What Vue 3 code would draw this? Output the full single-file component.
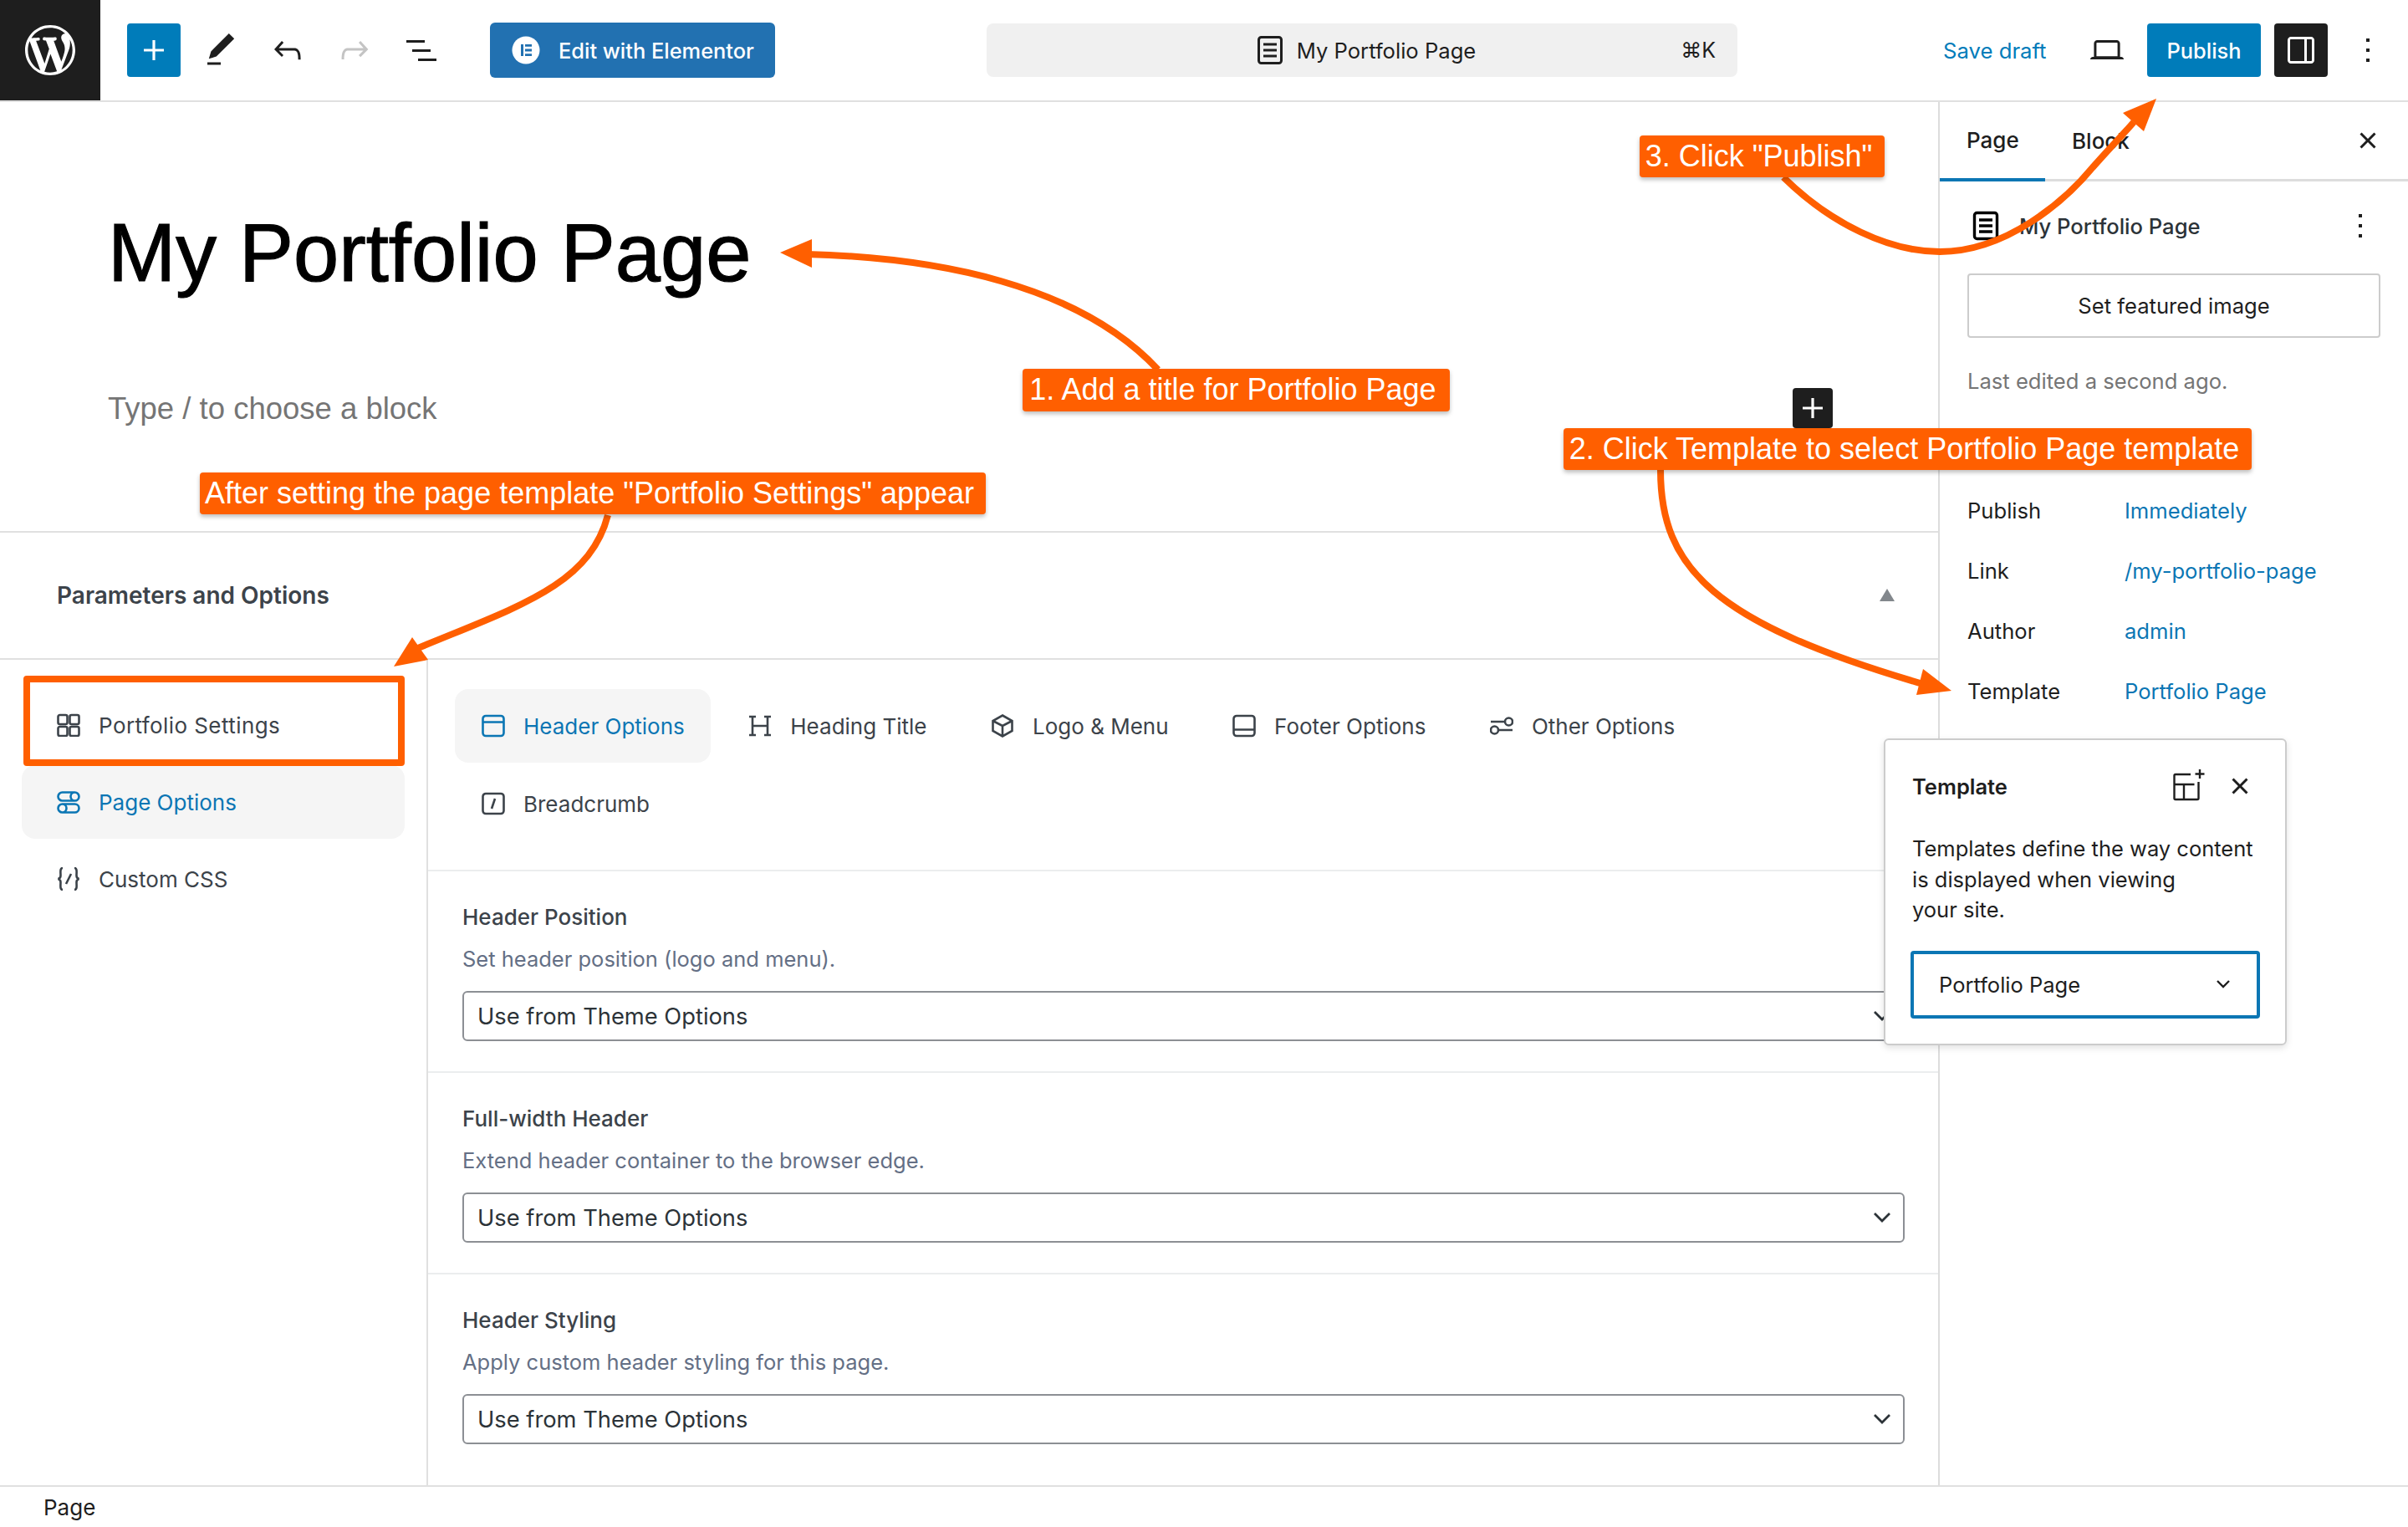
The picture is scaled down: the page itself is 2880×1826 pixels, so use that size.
<script setup>
const I = {
  plus: 'M18 11.2h-5.2V6h-1.6v5.2H6v1.6h5.2V18h1.6v-5.2H18z',
  close: 'M12 13.06l3.712 3.713 1.061-1.06L13.061 12l3.712-3.712-1.06-1.06L12 10.938 8.288 7.227l-1.061 1.06L10.939 12l-3.712 3.712 1.06 1.061L12 13.061z',
  more: 'M13 19h-2v-2h2v2zm0-6h-2v-2h2v2zm0-6h-2V5h2v2z'
}
const sideRows = [
  { label: 'Publish', value: 'Immediately' },
  { label: 'Link', value: '/my-portfolio-page' },
  { label: 'Author', value: 'admin' },
  { label: 'Template', value: 'Portfolio Page' }
]
const navItems = [
  { label: 'Portfolio Settings', wide: true, d: 'M3.500 2h7a2 2 0 0 1 2 2v7a2 2 0 0 1-2 2h-7a2 2 0 0 1-2-2V4a2 2 0 0 1 2-2zM17.500 2h7a2 2 0 0 1 2 2v7a2 2 0 0 1-2 2h-7a2 2 0 0 1-2-2V4a2 2 0 0 1 2-2zM3.500 16h7a2 2 0 0 1 2 2v7a2 2 0 0 1-2 2h-7a2 2 0 0 1-2-2v-7a2 2 0 0 1 2-2zM17.500 16h7a2 2 0 0 1 2 2v7a2 2 0 0 1-2 2h-7a2 2 0 0 1-2-2v-7a2 2 0 0 1 2-2z' },
  { label: 'Page Options', active: true, d: 'M6.500 2.500h15a5 5 0 0 1 0 10h-15a5 5 0 0 1 0-10zM16.500 7.500a5 5 0 1 0 10 0 5 5 0 1 0-10 0zM6.500 16.500h15a5 5 0 0 1 0 10h-15a5 5 0 0 1 0-10zM1.500 21.500a5 5 0 1 0 10 0 5 5 0 1 0-10 0z' },
  { label: 'Custom CSS', d: 'M7 1C3.500 1 4.500 6 4.500 10c0 2.500-1 3.500-3 4 2 .5 3 1.500 3 4 0 4-1 9 2.500 9M21 1c3.500 0 2.500 5 2.500 9 0 2.500 1 3.500 3 4-2 .5-3 1.500-3 4 0 4 1 9-2.500 9M17 8l-6 12' }
]
const tabs = [
  { label: 'Header Options', active: true, d: 'M5 2h18a3.500 3.500 0 0 1 3.500 3.500v17A3.500 3.500 0 0 1 23 26H5a3.500 3.500 0 0 1-3.500-3.500v-17A3.500 3.500 0 0 1 5 2zM1.500 9.500h25' },
  { label: 'Heading Title', d: 'M5 3v22M23 3v22M5 14h18M1 3h8M1 25h8M19 3h8M19 25h8' },
  { label: 'Logo & Menu', d: 'M14 1.500l11.500 6.500v12L14 26.500 2.500 20V8zM2.500 8L14 14l11.500-6M14 14v12.500' },
  { label: 'Footer Options', d: 'M5 2h18a3.500 3.500 0 0 1 3.500 3.500v17A3.500 3.500 0 0 1 23 26H5a3.500 3.500 0 0 1-3.500-3.500v-17A3.500 3.500 0 0 1 5 2zM1.500 18.500h25' },
  { label: 'Other Options', d: 'M1 9h16M27 9a4.500 4.500 0 1 1-9 0 4.500 4.500 0 1 1 9 0zM11 19h16M10 19a4.500 4.500 0 1 1-9 0 4.500 4.500 0 1 1 9 0z' },
  { label: 'Breadcrumb', d: 'M5 2h18a3.500 3.500 0 0 1 3.500 3.500v17A3.500 3.500 0 0 1 23 26H5a3.500 3.500 0 0 1-3.500-3.500v-17A3.500 3.500 0 0 1 5 2zM16 8l-4 12' }
]
const fields = [
  { label: 'Header Position', desc: 'Set header position (logo and menu).' },
  { label: 'Full-width Header', desc: 'Extend header container to the browser edge.' },
  { label: 'Header Styling', desc: 'Apply custom header styling for this page.' }
]
const arrows = [
  { d: 'M1385 442C1290 340 1120 308 965 304', head: '933,302 971,286 971,320' },
  { d: 'M1986 562C1986 680 2050 745 2300 818', head: '2334,826 2300,800 2292,831' },
  { d: 'M2133 212C2190 268 2260 301 2320 301C2400 301 2470 240 2503 200C2525 175 2540 160 2552 146', head: '2579,118 2539,135 2564,157' },
  { d: 'M727 616C705 700 620 725 500 775', head: '471,797 493,762 512,789' }
]
</script>

<template>
  <div class="page">
    <header class="topbar">
      <div class="logo">
        <svg width="60" height="60" viewBox="0 0 20 20"><path fill="#fff" d="M20 10c0-5.510-4.490-10-10-10C4.480 0 0 4.490 0 10c0 5.520 4.480 10 10 10 5.510 0 10-4.480 10-10zM7.780 15.370L4.370 6.220c.55-.02 1.170-.08 1.170-.08.5-.06.44-1.130-.06-1.110 0 0-1.450.11-2.370.11-.18 0-.37 0-.58-.01C4.120 2.690 6.870 1.110 10 1.110c2.330 0 4.450.87 6.050 2.340-.68-.11-1.650.39-1.650 1.580 0 .74.45 1.360.9 2.100.35.61.55 1.360.55 2.460 0 1.490-1.400 5-1.400 5l-3.030-8.370c.54-.02.82-.17.82-.17.5-.05.44-1.250-.06-1.220 0 0-1.440.12-2.380.12-.87 0-2.330-.12-2.330-.12-.5-.03-.56 1.200-.06 1.220l.92.08 1.260 3.410zM17.410 10c.24-.64.74-1.870.43-4.250.7 1.290 1.050 2.710 1.050 4.250 0 3.290-1.730 6.240-4.400 7.780.97-2.590 1.940-5.200 2.920-7.780zM6.100 18.090C3.120 16.650 1.110 13.530 1.110 10c0-1.300.23-2.480.72-3.590C3.250 10.300 4.670 14.200 6.100 18.090zm4.030-6.630l2.580 6.980c-.86.29-1.760.45-2.710.45-.79 0-1.570-.11-2.290-.33.81-2.380 1.620-4.740 2.420-7.100z"/></svg>
      </div>
      <div class="tools">
        <button class="tool add"><svg width="48" height="48" viewBox="0 0 24 24"><path fill="#fff" :d="I.plus"/></svg></button>
        <button class="tool"><svg width="48" height="48" viewBox="0 0 24 24"><path fill="#1e1e1e" d="M20.100 5.100L16.900 2 6.200 12.700l-1.300 4.400 4.500-1.300L20.100 5.100zM4 20.800h8v-1.500H4v1.500z"/></svg></button>
        <button class="tool"><svg width="48" height="48" viewBox="0 0 24 24"><path fill="#1e1e1e" d="M18.300 11.700c-.6-.6-1.400-.9-2.300-.9H6.700l2.900-3.300-1.100-1-4.500 5L8.500 16l1-1-2.700-2.700H16c.5 0 .9.2 1.300.5 1 1 1 3.400 1 4.500v.3h1.500v-.2c0-1.500 0-4.300-1.500-5.700z"/></svg></button>
        <button class="tool"><svg width="48" height="48" viewBox="0 0 24 24"><path fill="#c4c4c4" d="M15.600 6.500l-1.100 1 2.900 3.300H8c-.9 0-1.700.3-2.300.9-1.400 1.500-1.400 4.200-1.400 5.600v.2h1.500v-.3c0-1.100 0-3.500 1-4.500.3-.3.7-.5 1.300-.5h9.200L14.500 15l1.100 1.100 4.600-4.600-4.600-5z"/></svg></button>
        <button class="tool"><svg width="48" height="48" viewBox="0 0 24 24"><path fill="#1e1e1e" d="M3 6h11v1.500H3V6zm3.500 5.500h11V13h-11v-1.500zM21 17H10v1.500h11V17z"/></svg></button>
      </div>
      <div class="elementor">
        <svg width="34" height="34" viewBox="0 0 34 34"><circle cx="17" cy="17" r="16.500" fill="#fff"/><path fill="#2271b1" d="M11 10h3v14h-3zM16 10h8v2.800h-8zM16 15.600h8v2.800h-8zM16 21.200h8V24h-8z"/></svg>
        <span>Edit with Elementor</span>
      </div>
      <div class="search">
        <div class="search-title">
          <svg width="48" height="48" viewBox="0 0 24 24" fill="none" stroke="#1e1e1e" stroke-width="1.500"><rect x="5.250" y="4.250" width="13.500" height="15.500" rx="1.500"/><path d="M8 8.500h8M8 12h8M8 15.500h8"/></svg>
          <span>My Portfolio Page</span>
        </div>
        <span class="shortcut">⌘K</span>
      </div>
      <div class="actions">
        <span class="save">Save draft</span>
        <svg class="laptop" width="48" height="48" viewBox="0 0 24 24"><path fill="#1e1e1e" d="M20.500 16h-.7V8c0-1.100-.9-2-2-2H6.200c-1.100 0-2 .9-2 2v8h-.7c-.8 0-1.500.7-1.500 1.500h20c0-.8-.7-1.500-1.500-1.500zM5.700 8c0-.3.2-.5.5-.5h11.600c.3 0 .5.2.5.5v7.600H5.700V8z"/></svg>
        <button class="publish">Publish</button>
        <button class="toggle"><svg width="48" height="48" viewBox="0 0 24 24"><path fill="#fff" d="M18 4H6c-1.100 0-2 .9-2 2v12c0 1.100.9 2 2 2h12c1.100 0 2-.9 2-2V6c0-1.100-.9-2-2-2zm-4 14.500H6c-.3 0-.5-.2-.5-.5V6c0-.3.2-.5.5-.5h8v13zm4.500-.5c0 .3-.2.5-.5.5h-2.500v-13H18c.3 0 .5.2.5.5v12z"/></svg></button>
        <svg width="48" height="48" viewBox="0 0 24 24"><path fill="#1e1e1e" :d="I.more"/></svg>
      </div>
    </header>

    <div class="main">
      <section class="editor">
        <div class="canvas">
          <h1 class="title">My Portfolio Page</h1>
          <p class="placeholder">Type / to choose a block</p>
          <div class="inserter"><svg width="48" height="48" viewBox="0 0 24 24"><path fill="#fff" :d="I.plus"/></svg></div>
        </div>
        <div class="meta-head">
          <span>Parameters and Options</span>
          <i class="caret"></i>
        </div>
        <div class="meta-body">
          <nav class="nav">
            <div v-for="n in navItems" :key="n.label" class="nav-item" :class="{ active: n.active, wide: n.wide }">
              <svg width="28" height="28" viewBox="0 0 28 28" fill="none" stroke="currentColor" stroke-width="2.600"><path :d="n.d"/></svg>
              <span>{{ n.label }}</span>
            </div>
          </nav>
          <div class="panel">
            <div class="tabs">
              <div v-for="t in tabs" :key="t.label" class="tab" :class="{ active: t.active }">
                <svg width="28" height="28" viewBox="0 0 28 28" fill="none" stroke="currentColor" stroke-width="2.600"><path :d="t.d"/></svg>
                <span>{{ t.label }}</span>
              </div>
            </div>
            <div v-for="f in fields" :key="f.label" class="field">
              <div class="f-label">{{ f.label }}</div>
              <div class="f-desc">{{ f.desc }}</div>
              <div class="f-select">
                <span>Use from Theme Options</span>
                <svg width="24" height="16" viewBox="0 0 24 16" fill="none" stroke="#2c3338" stroke-width="2.800"><path d="M3 3l9 9 9-9"/></svg>
              </div>
            </div>
          </div>
        </div>
      </section>

      <aside class="sidebar">
        <div class="side-tabs">
          <span class="side-tab on">Page</span>
          <span class="side-tab">Block</span>
          <svg class="side-close" width="48" height="48" viewBox="0 0 24 24"><path fill="#1e1e1e" :d="I.close"/></svg>
        </div>
        <div class="side-body">
          <div class="doc-row">
            <svg width="48" height="48" viewBox="0 0 24 24" fill="none" stroke="#000" stroke-width="1.700"><rect x="5.250" y="4.250" width="13.500" height="15.500" rx="1.500"/><path d="M8 8.500h8M8 12h8M8 15.500h8"/></svg>
            <span>My Portfolio Page</span>
            <svg class="doc-more" width="48" height="48" viewBox="0 0 24 24"><path fill="#1e1e1e" :d="I.more"/></svg>
          </div>
          <div class="featured">Set featured image</div>
          <div class="edited">Last edited a second ago.</div>
          <div class="rows">
            <div v-for="r in sideRows" :key="r.label" class="row">
              <span class="r-label">{{ r.label }}</span>
              <span class="r-value">{{ r.value }}</span>
            </div>
          </div>
        </div>
      </aside>
    </div>

    <footer class="status">Page</footer>

    <div class="popover">
      <div class="pop-head">
        <b>Template</b>
        <svg class="pop-add" width="38" height="38" viewBox="0 0 38 38" fill="none" stroke="#1e1e1e" stroke-width="2.400"><path d="M22 6H4a1.500 1.500 0 0 0-1.500 1.500v27a1.500 1.500 0 0 0 1.500 1.500h26a1.500 1.500 0 0 0 1.500-1.500V15M2.500 18h24M14 18v18M33 0v11M27.500 5.500h11"/></svg>
        <svg class="pop-close" width="48" height="48" viewBox="0 0 24 24"><path fill="#1e1e1e" :d="I.close"/></svg>
      </div>
      <p class="pop-text">Templates define the way content<br>is displayed when viewing<br>your site.</p>
      <div class="pop-select">
        <span>Portfolio Page</span>
        <svg width="18" height="12" viewBox="0 0 18 12" fill="none" stroke="#1e1e1e" stroke-width="2.400"><path d="M2 2l7 7 7-7"/></svg>
      </div>
    </div>

    <div class="highlight"></div>
    <svg class="overlay" width="2880" height="1826" viewBox="0 0 2880 1826">
      <g v-for="a in arrows" :key="a.d">
        <path :d="a.d" fill="none" stroke="#ff5f00" stroke-width="8"/>
        <polygon :points="a.head" fill="#ff5f00"/>
      </g>
    </svg>
    <div class="note n1">1. Add a title for Portfolio Page</div>
    <div class="note n2">2. Click Template to select Portfolio Page template</div>
    <div class="note n3">3. Click "Publish"</div>
    <div class="note n4">After setting the page template "Portfolio Settings" appear</div>
  </div>
</template>

<style>
html, body { margin: 0; background: #fff; }
</style>

<style scoped>
.page {
  position: relative;
  width: 2880px;
  height: 1826px;
  overflow: hidden;
  background: #fff;
  color: #1e1e1e;
  font-family: Inter, "DejaVu Sans", sans-serif;
  font-size: 26px;
  display: flex;
  flex-direction: column;
}
svg { display: block; flex: none; }
button { border: 0; padding: 0; margin: 0; font: inherit; background: none; }

.topbar { height: 120px; flex: none; display: flex; align-items: center; border-bottom: 2px solid #e0e0e0; }
.logo { width: 120px; height: 120px; background: #1e1e1e; display: flex; align-items: center; justify-content: center; flex: none; }
.tools { display: flex; gap: 16px; margin-left: 32px; }
.tool { width: 64px; height: 64px; display: flex; align-items: center; justify-content: center; border-radius: 4px; }
.add { background: #007cba; }
.elementor { margin-left: 50px; width: 341px; height: 66px; box-sizing: border-box; padding-left: 26px; gap: 22px; display: flex; align-items: center; background: #2271b1; color: #fff; border-radius: 6px; font-weight: 500; font-size: 25.4px; }
.search { margin-left: 253px; width: 898px; height: 64px; background: #f0f0f0; border-radius: 8px; position: relative; display: flex; align-items: center; justify-content: center; flex: none; font-size: 25.6px; }
.search-title { display: flex; align-items: center; gap: 8px; margin-left: 2px; }
.shortcut { position: absolute; right: 26px; font-size: 25px; }
.actions { margin-left: 246px; display: flex; align-items: center; flex: none; }
.save { color: #007cba; width: 124px; white-space: nowrap; font-size: 25.7px; }
.laptop { margin-left: 48px; }
.publish { margin-left: 24px; width: 136px; height: 64px; background: #007cba; color: #fff; border-radius: 4px; font-weight: 500; font-size: 25.4px; }
.toggle { margin-left: 16px; width: 64px; height: 64px; background: #1e1e1e; border-radius: 4px; display: flex; align-items: center; justify-content: center; }
.toggle + svg { margin-left: 24px; }

.main { flex: 1; display: flex; min-height: 0; }
.editor { flex: 1; min-width: 0; display: flex; flex-direction: column; }
.canvas { height: 513px; flex: none; position: relative; border-bottom: 2px solid #e0e0e0; padding-left: 129px; }
.title { margin: 0; padding-top: 126px; font: 400 97.500px/110px "Liberation Sans", Arial, sans-serif; color: #000; -webkit-text-stroke: 1.2px #000; }
.placeholder { margin: 0; margin-top: 106px; font: 400 36.500px/50px "Liberation Sans", Arial, sans-serif; color: #757575; }
.inserter { position: absolute; left: 2144px; top: 342px; width: 48px; height: 48px; background: #1e1e1e; border-radius: 4px; }

.meta-head { height: 152px; flex: none; box-sizing: border-box; display: flex; align-items: center; justify-content: space-between; padding: 0 52px 2px 68px; border-bottom: 2px solid #e0e0e0; font-weight: 600; font-size: 28px; color: #3c434a; }
.meta-head span { margin-top: 2px; }
.caret { width: 0; height: 0; border-left: 9px solid transparent; border-right: 9px solid transparent; border-bottom: 15px solid #82878c; }
.meta-body { flex: 1; display: flex; min-height: 0; }
.nav { width: 512px; flex: none; box-sizing: border-box; border-right: 2px solid #e0e0e0; padding: 34px 26px 0; display: flex; flex-direction: column; gap: 4px; }
.nav-item { height: 88px; display: flex; align-items: center; gap: 22px; padding-left: 42px; border-radius: 16px; color: #3c434a; }
.nav-item.active { background: #f5f5f5; color: #0b76b4; }
.nav-item.wide span { letter-spacing: .42px; }
.panel { flex: 1; min-width: 0; }
.tabs { height: 181px; padding: 35px 32px 35px; border-bottom: 2px solid #ebedee; display: flex; flex-wrap: wrap; gap: 5px 13.500px; align-content: flex-start; }
.tab { height: 88px; display: flex; align-items: center; gap: 22px; padding: 0 31px 0 32px; border-radius: 16px; color: #3c434a; }
.tab.active { background: #f5f5f5; color: #0b76b4; }
.field { padding: 40px 40px 36px 41px; border-bottom: 2px solid #ebedee; }
.field:last-child { border-bottom: 0; }
.f-label { line-height: 30px; font-weight: 500; color: #3c434a; }
.f-desc { line-height: 30px; margin-top: 20px; color: #646f85; font-size: 25.500px; }
.f-select { margin-top: 23px; height: 60px; box-sizing: border-box; border: 2px solid #8c8f94; border-radius: 6px; display: flex; align-items: center; justify-content: space-between; padding: 0 13px 0 16px; font-size: 27.300px; color: #2c3338; }

.sidebar { width: 560px; flex: none; border-left: 2px solid #ddd; display: flex; flex-direction: column; }
.side-tabs { height: 92px; flex: none; display: flex; align-items: center; position: relative; border-bottom: 3px solid #ddd; }
.side-tab { height: 92px; line-height: 94px; padding: 0 32px; font-weight: 500; box-sizing: border-box; }
.side-tab.on { width: 126px; border-bottom: 4px solid #0b76b4; height: 95px; padding-bottom: 3px; align-self: flex-start; line-height: 92px; }
.side-close { position: absolute; right: 24px; top: 22px; }
.side-body { padding: 0 33px; flex: 1; font-size: 25.600px; }
.doc-row { height: 64px; margin-top: 21px; display: flex; align-items: center; gap: 16px; font-weight: 500; color: #2c3338; }
.doc-row > svg:first-child { margin-left: -2px; }
.doc-more { margin-left: auto; }
.featured { margin-top: 25px; height: 73px; border: 2px solid #ccc; border-radius: 4px; display: flex; align-items: center; justify-content: center; color: #1e1e1e; font-weight: 400; }
.edited { margin-top: 36px; line-height: 32px; color: #757575; }
.rows { margin-top: 102px; }
.row { height: 72px; display: flex; align-items: center; }
.r-label { width: 188px; color: #1e1e1e; }
.r-value { color: #0b76b4; white-space: nowrap; }

.status { flex: none; height: 50px; border-top: 2px solid #e0e0e0; padding-left: 52px; line-height: 50px; box-sizing: border-box; }

.popover { position: absolute; left: 2253px; top: 883px; width: 482px; height: 367px; box-sizing: border-box; border: 2px solid #ccc; border-radius: 6px; background: #fff; box-shadow: 0 3px 8px rgba(0,0,0,.12); padding: 30px 30px 0 32px; font-size: 25.500px; }
.pop-head { height: 50px; display: flex; align-items: center; }
.pop-head b { font-weight: 600; }
.pop-add { margin-left: auto; margin-top: -3px; overflow: visible; }
.pop-close { margin-left: 19px; }
.pop-text { margin: 32px 0 0; line-height: 36.500px; }
.pop-select { margin-top: 30px; margin-left: -2px; width: 418px; height: 81px; box-sizing: border-box; border: 4px solid #0b76b4; border-radius: 4px; display: flex; align-items: center; justify-content: space-between; padding: 0 31px 0 30px; }

.highlight { position: absolute; left: 28px; top: 808px; width: 456px; height: 108px; box-sizing: border-box; border: 8px solid #ff5f00; border-radius: 4px; }
.overlay { position: absolute; left: 0; top: 0; pointer-events: none; }
.note { position: absolute; box-sizing: border-box; padding-right: 8px; background: #ff5f00; color: #fff; border-radius: 4px; font: 400 36px/50px "Liberation Sans", Arial, sans-serif; white-space: nowrap; text-align: center; box-shadow: 0 3px 5px rgba(0,0,0,.25); }
.n1 { left: 1223px; top: 441px; width: 511px; height: 51px; }
.n2 { left: 1870px; top: 512px; width: 823px; height: 50px; }
.n3 { left: 1961px; top: 162px; width: 293px; height: 50px; }
.n4 { left: 239px; top: 565px; width: 940px; height: 50px; }
</style>
